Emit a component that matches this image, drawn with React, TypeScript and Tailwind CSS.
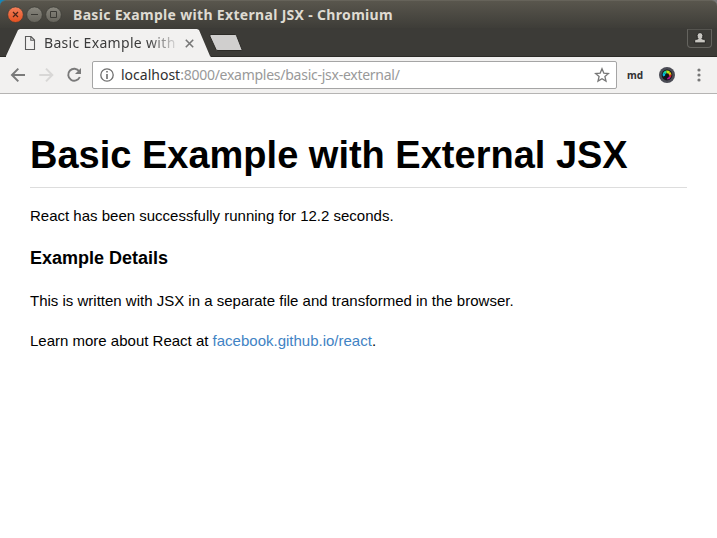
function TitleBar() {
  return (
    <header className="flex h-7 items-center rounded-t-[6px] border-t border-[#66635a] bg-linear-to-b from-[#59564d] to-[#3e3d38] pl-[7px]">
      <svg width="56" height="20" viewBox="0 0 56 20" className="shrink-0" fill="none">
        <defs>
          <linearGradient id="close" x1="0" y1="0" x2="0" y2="1">
            <stop offset="0" stopColor="#f4805b" />
            <stop offset="1" stopColor="#e4501f" />
          </linearGradient>
          <linearGradient id="control" x1="0" y1="0" x2="0" y2="1">
            <stop offset="0" stopColor="#89877e" />
            <stop offset="1" stopColor="#66645c" />
          </linearGradient>
        </defs>
        <circle cx="8.5" cy="9.7" r="7.8" fill="url(#close)" stroke="#3a3934" strokeWidth=".7" />
        <circle cx="27.5" cy="9.7" r="7.8" fill="url(#control)" stroke="#3a3934" strokeWidth=".7" />
        <circle cx="46.5" cy="9.7" r="7.8" fill="url(#control)" stroke="#3a3934" strokeWidth=".7" />
        <path d="m6 7 5 5m0-5-5 5" stroke="#4b2519" strokeWidth="1.2" />
        <path d="M24 9.5h7M43.5 6.5h6v6h-6z" stroke="#3b3a35" />
      </svg>
      <h1 className="ml-[10px] font-['Noto_Sans','Open_Sans',sans-serif] text-[14px] leading-5 font-bold tracking-[0.32px] whitespace-nowrap text-[#dfdbd2]">
        Basic Example with External JSX - Chromium
      </h1>
    </header>
  );
}

function TabStrip() {
  return (
    <div className="flex h-[29px] items-start border-b border-[#2c2b27] bg-[#3c3b37] pl-[6px]">
      <div className="relative z-10 flex h-[30px] w-[206px] shrink-0 items-center bg-[#f2f1f0] pl-[18px] [clip-path:polygon(0_100%,0_28px,12px_2px,14px_1px,191px_1px,193px_2px,204px_28px,206px_100%)]">
        <svg width="12" height="15" viewBox="0 0 12 15" fill="none" stroke="#5a5a5a" className="shrink-0">
          <path d="M1.5.5h5.5l3.5 3.5v9.5h-9zM6.8.5v3.7h3.7" strokeWidth="1.1" />
        </svg>
        <span className="ml-2 w-[132px] font-['Noto_Sans','Open_Sans',sans-serif] text-[14px] leading-5 tracking-[0.32px] whitespace-nowrap text-[#3c3c3c] [mask-image:linear-gradient(to_right,black_104px,transparent_136px)]">
          Basic Example with
        </span>
        <svg width="9" height="9" viewBox="0 0 9 9" stroke="#777" strokeWidth="1.6" className="ml-[9px] shrink-0">
          <path d="m.8.8 7.4 7.4m0-7.4L.8 8.2" />
        </svg>
      </div>
      <svg width="36" height="18" viewBox="0 0 36 18" className="-ml-[3px] mt-[6px] shrink-0">
        <path d="M2 .5h24q1 0 1.5 1l5.5 14q.3 1-1 1H9q-1.5 0-2-1L.8 2Q.5.5 2 .5z" fill="#d0cfce" stroke="#2c2b27" />
      </svg>
      <div className="mt-[1px] mr-[5px] ml-auto flex h-[19px] w-[25px] items-center justify-center rounded-b-[4px] border border-[#65645f] border-t-[#55544f]">
        <svg width="12" height="12" viewBox="0 0 11 11" fill="#c8c6c1" stroke="#22211f" strokeWidth=".9" className="mb-px">
          <path d="M.6 10V8Q.8 6.5 3.8 6.3 2.8 5.2 2.8 3.2q0-2.7 2.7-2.7t2.7 2.7q0 2-1 3.1 3 .2 3.2 1.7v2z" />
        </svg>
      </div>
    </div>
  );
}

function Toolbar() {
  return (
    <nav className="flex h-[37px] items-center border-b border-[#b5b4b3] bg-[#f2f1f0]">
      <svg width="16" height="16" viewBox="0 0 16 16" fill="none" stroke="#7a7a7a" strokeWidth="2" className="ml-[10px] shrink-0">
        <path d="M15 8H2.5M8.3 1.6 2 8l6.3 6.4" />
      </svg>
      <svg width="16" height="16" viewBox="0 0 16 16" fill="none" stroke="#d8d7d6" strokeWidth="2" className="ml-3 shrink-0">
        <path d="M1.3 8h12.5M8 1.6 14.3 8 8 14.4" />
      </svg>
      <svg width="16" height="16" viewBox="0 0 16 16" className="ml-[12px] shrink-0" fill="none">
        <path d="M13.2 4.3A6 6 0 1 0 13.8 10" stroke="#7a7a7a" strokeWidth="1.9" />
        <path d="M15 1v6H9z" fill="#7a7a7a" />
      </svg>
      <div className="ml-[10px] flex h-7 w-[525px] shrink-0 items-center rounded-[2px] border border-[#a5a5a5] bg-white pl-[7px]">
        <svg width="14" height="14" viewBox="0 0 14 14" fill="none" stroke="#6e6e6e" className="shrink-0">
          <circle cx="7" cy="7" r="6.2" strokeWidth="1.3" />
          <path d="M7 3v1.6M7 6v5" strokeWidth="1.6" />
        </svg>
        <span className="ml-[7px] font-['Noto_Sans','Open_Sans',sans-serif] text-[14px] leading-5 whitespace-nowrap text-[#999]">
          <span className="text-[#303030]">localhost</span>
          <span className="tracking-[-0.26px]">:8000/examples/basic-jsx-external/</span>
        </span>
        <svg width="16" height="16" viewBox="0 0 16 16" fill="none" stroke="#777" strokeWidth="1.3" className="mr-[6px] ml-auto">
          <path d="m8 1.8 1.8 4.3 4.7.4-3.6 3 1.1 4.6L8 11.7l-4 2.4 1.1-4.6-3.6-3 4.7-.4z" />
        </svg>
      </div>
      <span className="ml-[10px] w-4 font-['Noto_Sans',sans-serif] text-[10px] leading-4 font-bold text-[#303030]">md</span>
      <svg width="18" height="18" viewBox="0 0 18 18" className="ml-[15px] shrink-0" fill="none">
        <circle cx="9" cy="9" r="8" fill="#4b4c55" />
        <circle cx="9" cy="9" r="5.4" fill="#15151b" />
        <g strokeWidth="2.6">
          <path d="M6.2 10A3.2 3.2 0 0 1 6.2 7.4" stroke="#00bce8" />
          <path d="M6.2 7.4A3.2 3.2 0 0 1 8.4 5.9" stroke="#16d8a0" />
          <path d="M8.4 5.9a3.2 3.2 0 0 1 2.9.9" stroke="#b8e512" />
          <path d="M11.3 6.8a3.2 3.2 0 0 1 .9 2" stroke="#e8c512" />
          <path d="M12.2 8.8a3.2 3.2 0 0 1-.6 2" stroke="#d92828" />
          <path d="M11.6 10.8a3.2 3.2 0 0 1-2.4 1.4" stroke="#b9139d" />
        </g>
        <circle cx="9.1" cy="10" r="1.9" fill="#111118" />
      </svg>
      <svg width="4" height="14" viewBox="0 0 4 14" fill="#777" className="ml-[21px] shrink-0">
        <circle cx="2" cy="2" r="1.6" />
        <circle cx="2" cy="7" r="1.6" />
        <circle cx="2" cy="12" r="1.6" />
      </svg>
    </nav>
  );
}

export default function App() {
  return (
    <div className="h-[538px] w-[717px] overflow-hidden bg-white">
      <div className="bg-linear-to-r from-[#1686b8] from-50% to-[#777] to-50%">
        <TitleBar />
      </div>
      <TabStrip />
      <Toolbar />
      <main className="px-[30px] font-['Liberation_Sans',Arial,sans-serif] text-[15px] text-black">
        <h1 className="h-[94px] border-b border-[#ddd] pt-[36px] text-[38px] leading-[50px] font-bold whitespace-nowrap">
          Basic Example with External JSX
        </h1>
        <p className="mt-[15px] leading-[26px]">React has been successfully running for 12.2 seconds.</p>
        <h2 className="mt-[16px] text-[18px] leading-[27px] font-bold">Example Details</h2>
        <p className="mt-[16px] leading-[26px]">This is written with JSX in a separate file and transformed in the browser.</p>
        <p className="mt-[14px] leading-[26px]">
          Learn more about React at <a href="#" className="text-[#4183c4]">facebook.github.io/react</a>.
        </p>
      </main>
    </div>
  );
}
